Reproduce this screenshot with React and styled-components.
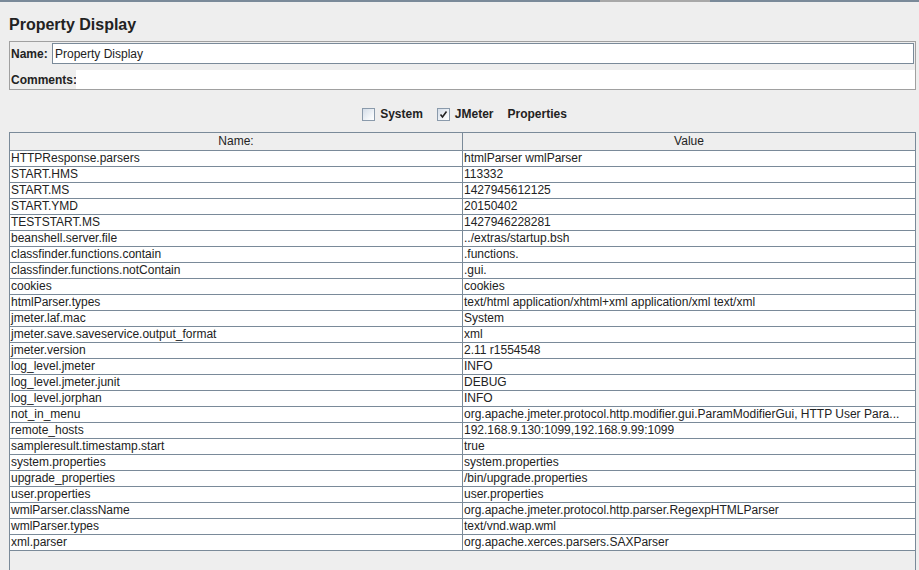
import React from 'react';
import styled, { createGlobalStyle } from 'styled-components';

const GlobalStyle = createGlobalStyle`
    *, *::before, *::after {
        box-sizing: border-box;
    }
    html, body {
        margin: 0;
        padding: 0;
        background: #eeeeee;
    }
    body {
        font-family: "Liberation Sans", Arial, sans-serif;
        font-size: 12px;
        color: #222;
    }
`

const Page = styled.div`
    width: 919px;
    height: 570px;
    overflow: hidden;
    display: flex;
    flex-direction: column;
    background: #eeeeee;
`

const TopLine = styled.div`
    height: 2px;
    flex: none;
    background: linear-gradient(to right, #7a8a99 0, #7a8a99 600px, #a8a8a8 600px, #a8a8a8 710px, #7a8a99 710px);
`

const Title = styled.h1`
    margin: 0;
    flex: none;
    padding: 13px 0 0 9px;
    height: 39px;
    font-size: 16px;
    line-height: 19px;
    font-weight: bold;
    color: #222;
`

const NamePanel = styled.div`
    flex: none;
    height: 49px;
    margin: 0 3px 0 9px;
    border: 1px solid #a0a0a0;
    display: flex;
    flex-direction: column;
    padding: 1px 1px 0 1px;
`

const FieldRow = styled.div`
    display: flex;
    align-items: center;
    height: ${p => p.h}px;
    margin-top: ${p => p.top || 0}px;
`

const Label = styled.span`
    font-weight: bold;
    font-size: 12px;
    width: ${p => p.w}px;
    flex: none;
`

const TextField = styled.div`
    flex: 1;
    height: 21px;
    border: 1px solid #7a8a99;
    background: #fff;
    display: flex;
    align-items: center;
    padding-left: 2px;
    font-size: 12px;
`

const TextArea = styled.div`
    flex: 1;
    align-self: stretch;
    background: #fff;
    margin-right: -1px;
`

const CheckRow = styled.div`
    flex: none;
    height: 42px;
    padding-top: 6px;
    display: flex;
    align-items: center;
    justify-content: center;
    padding-left: 10px;
`

const CheckItem = styled.label`
    display: flex;
    align-items: center;
    gap: 5px;
    margin-right: ${p => p.mr || 0}px;
    font-weight: bold;
    font-size: 12px;
`

const Box = styled.span`
    width: 13px;
    height: 13px;
    border: 1px solid #8a9aab;
    background: linear-gradient(135deg, #d4dde8 0%, #f4f7fa 70%, #ffffff 100%);
    display: flex;
    align-items: center;
    justify-content: center;
`

const PlainLabel = styled.span`
    font-weight: bold;
    font-size: 12px;
`

const TablePane = styled.div`
    flex: 1;
    margin: 0 3px 0 9px;
    border: 1px solid #7a8a99;
    border-bottom: none;
    display: flex;
    flex-direction: column;
`

const Row = styled.div`
    display: grid;
    grid-template-columns: 453px 1fr;
    height: ${p => (p.header ? 18 : 16)}px;
    border-bottom: 1px solid #7a8a99;
    background: ${p => (p.header ? '#eeeeee' : '#ffffff')};
`

const Cell = styled.div`
    line-height: ${p => (p.header ? 17 : 15)}px;
    font-size: 12px;
    padding-left: ${p => (p.header ? 0 : 1)}px;
    text-align: ${p => (p.header ? 'center' : 'left')};
    white-space: nowrap;
    overflow: hidden;
    border-right: ${p => (p.first ? '1px solid #7a8a99' : 'none')};
    color: #222;
`

const CheckMark = () => (
    <svg width="9" height="9" viewBox="0 0 9 9">
        <path d="M1.5 4.5 L3.5 7 L7.5 1.5" fill="none" stroke="#222" strokeWidth="1.6" />
    </svg>
)

const properties = [
    ['HTTPResponse.parsers', 'htmlParser wmlParser'],
    ['START.HMS', '113332'],
    ['START.MS', '1427945612125'],
    ['START.YMD', '20150402'],
    ['TESTSTART.MS', '1427946228281'],
    ['beanshell.server.file', '../extras/startup.bsh'],
    ['classfinder.functions.contain', '.functions.'],
    ['classfinder.functions.notContain', '.gui.'],
    ['cookies', 'cookies'],
    ['htmlParser.types', 'text/html application/xhtml+xml application/xml text/xml'],
    ['jmeter.laf.mac', 'System'],
    ['jmeter.save.saveservice.output_format', 'xml'],
    ['jmeter.version', '2.11 r1554548'],
    ['log_level.jmeter', 'INFO'],
    ['log_level.jmeter.junit', 'DEBUG'],
    ['log_level.jorphan', 'INFO'],
    ['not_in_menu', 'org.apache.jmeter.protocol.http.modifier.gui.ParamModifierGui, HTTP User Para...'],
    ['remote_hosts', '192.168.9.130:1099,192.168.9.99:1099'],
    ['sampleresult.timestamp.start', 'true'],
    ['system.properties', 'system.properties'],
    ['upgrade_properties', '/bin/upgrade.properties'],
    ['user.properties', 'user.properties'],
    ['wmlParser.className', 'org.apache.jmeter.protocol.http.parser.RegexpHTMLParser'],
    ['wmlParser.types', 'text/vnd.wap.wml'],
    ['xml.parser', 'org.apache.xerces.parsers.SAXParser'],
]

const App = () => {
    return (
        <Page>
            <GlobalStyle />
            <TopLine />
            <Title>Property Display</Title>
            <NamePanel>
                <FieldRow h={21}>
                    <Label w={41}>Name:</Label>
                    <TextField>Property Display</TextField>
                </FieldRow>
                <FieldRow h={19} top={6}>
                    <Label w={65}>Comments:</Label>
                    <TextArea />
                </FieldRow>
            </NamePanel>
            <CheckRow>
                <CheckItem mr={14}>
                    <Box />
                    System
                </CheckItem>
                <CheckItem mr={14}>
                    <Box><CheckMark /></Box>
                    JMeter
                </CheckItem>
                <PlainLabel>Properties</PlainLabel>
            </CheckRow>
            <TablePane>
                <Row header>
                    <Cell header first>Name:</Cell>
                    <Cell header>Value</Cell>
                </Row>
                {properties.map(([name, value]) => (
                    <Row key={name}>
                        <Cell first>{name}</Cell>
                        <Cell>{value}</Cell>
                    </Row>
                ))}
            </TablePane>
        </Page>
    )
}

export default App
